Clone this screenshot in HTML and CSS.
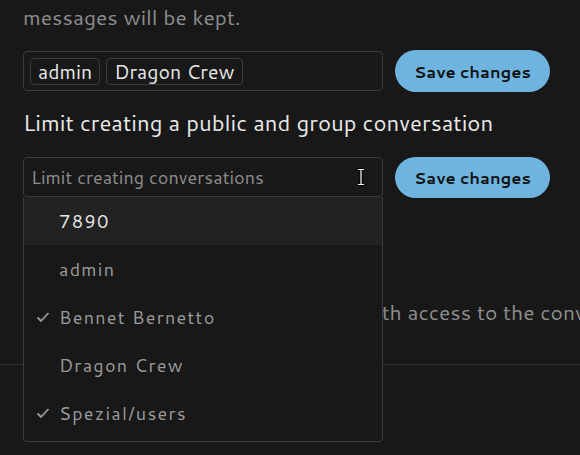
FILE: index.html
```html
<!DOCTYPE html>
<html>
<head>
<meta charset="utf-8">
<link rel="stylesheet" href="styles.css">
</head>
<body>
<div class="section">
  <p class="note">messages will be kept.</p>
  <div class="row row-first">
    <div class="field">
      <span class="chip">admin</span>
      <span class="chip">Dragon Crew</span>
    </div>
    <button class="btn">Save changes</button>
  </div>
  <h3 class="heading">Limit creating a public and group conversation</h3>
  <div class="row row-second">
    <div class="select-wrap">
      <div class="field select">
        <span class="placeholder">Limit creating conversations</span>
        <svg class="ibeam" width="10" height="18" viewBox="0 0 10 18">
          <path d="M2 1.5h6M2 16.5h6M5 1.5v15" stroke="#000" stroke-width="3" fill="none"/>
          <path d="M2 1.5h6M2 16.5h6M5 1.5v15" stroke="#fff" stroke-width="1.2" fill="none"/>
        </svg>
      </div>
      <ul class="menu">
        <li class="opt active"><span class="check"></span>7890</li>
        <li class="opt"><span class="check"></span>admin</li>
        <li class="opt"><span class="check"><svg width="14" height="14" viewBox="0 0 14 14"><path d="M1.5 7.5l3.5 3.5 7.5-8" stroke="#9a9a9a" stroke-width="1.8" fill="none"/></svg></span>Bennet Bernetto</li>
        <li class="opt"><span class="check"></span>Dragon Crew</li>
        <li class="opt"><span class="check"><svg width="14" height="14" viewBox="0 0 14 14"><path d="M1.5 7.5l3.5 3.5 7.5-8" stroke="#9a9a9a" stroke-width="1.8" fill="none"/></svg></span>Spezial/users</li>
      </ul>
    </div>
    <button class="btn">Save changes</button>
  </div>
  <p class="note call-note">When a call has started, everyone with access to the conversation can join the call.</p>
</div>
<div class="section next"></div>
</body>
</html>
```
FILE: styles.css
```css
* { box-sizing: border-box; }
html, body { margin: 0; padding: 0; }
body {
  background: #181818;
  font-family: "Cantarell", "DejaVu Sans", sans-serif;
  color: #e6e6e6;
  width: 580px;
  height: 455px;
  overflow: hidden;
}
.section {
  padding: 0 0 0 23px;
  border-bottom: 1px solid #333;
}
.note {
  margin: 0;
  color: #8c8c8c;
  font-size: 21px;
  line-height: 24px;
  white-space: nowrap;
}
.section > .note:first-child { margin-top: 5px; }
.row {
  display: flex;
  align-items: flex-start;
  gap: 12px;
}
.row-first { margin-top: 21px; align-items: center; }
.row-second { margin-top: 20px; }
.field {
  width: 360px;
  height: 40px;
  border: 1px solid #3a3a3a;
  border-radius: 4px;
  display: flex;
  align-items: center;
  gap: 6px;
  padding: 0 6px;
}
.chip {
  border: 1px solid #3a3a3a;
  border-radius: 4px;
  height: 27px;
  line-height: 25px;
  padding: 0 7px;
  font-size: 19.5px;
  color: #e6e6e6;
}
.btn {
  width: 155px;
  height: 42px;
  border: none;
  border-radius: 21px;
  background: #6eb4de;
  color: #111;
  font-family: "Cantarell", "DejaVu Sans", sans-serif;
  font-weight: bold;
  font-size: 16.4px;
  padding: 0;
}
.row-second .btn { height: 41px; }
.heading {
  margin: 17px 0 0;
  font-size: 22.2px;
  font-weight: normal;
  line-height: 28px;
  color: #e8e8e8;
}
.select-wrap { position: relative; }
.select {
  justify-content: space-between;
  padding: 0 16px 0 7px;
}
.placeholder {
  color: #8c8c8c;
  font-size: 18px;
}
.menu {
  position: absolute;
  top: 40px;
  left: 0;
  width: 360px;
  margin: 0;
  padding: 0 0 4px;
  list-style: none;
  background: #181818;
  border: 1px solid #3a3a3a;
  border-top: none;
  border-radius: 0 0 4px 4px;
  z-index: 2;
}
.opt {
  height: 48px;
  display: flex;
  align-items: center;
  font-size: 18px;
  letter-spacing: 1.25px;
  color: #9a9a9a;
}
.opt.active {
  background: #222;
  color: #e6e6e6;
}
.check {
  width: 35px;
  padding-left: 12px;
  display: flex;
  align-items: center;
}
.call-note { margin-top: 102px; padding-bottom: 40px; text-indent: 4px; }
.next { height: 100px; border: none; }
```
